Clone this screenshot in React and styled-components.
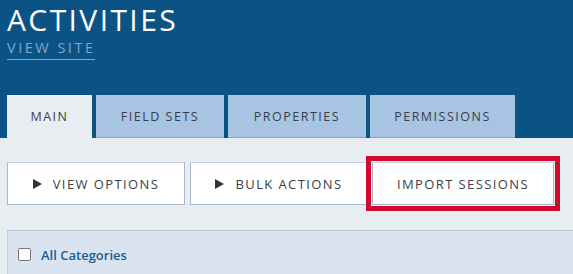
import React from "react";
import styled, { createGlobalStyle } from "styled-components";

const Global = createGlobalStyle`
  html, body { margin: 0; padding: 0; background: #e8edf2; }
  body { font-family: "Open Sans", Lato, sans-serif; }
  * { box-sizing: border-box; }
`;

const Page = styled.div`
  width: 573px;
  height: 274px;
  overflow: hidden;
  background: #e8edf2;
`;

const Header = styled.header`
  background: #0b5385;
  height: 138px;
  padding: 0 7px;
  display: flex;
  flex-direction: column;
`;

const Title = styled.h1`
  margin: 4px 0 0;
  font-size: 30px;
  font-weight: 400;
  line-height: 32px;
  letter-spacing: 2.4px;
  color: #ffffff;
`;

const SiteLink = styled.a`
  align-self: flex-start;
  margin-top: 3px;
  font-size: 14.5px;
  line-height: 17px;
  letter-spacing: 2.5px;
  color: #7fa6cb;
  text-decoration: none;
  border-bottom: 1px solid #7fa6cb;
  padding-bottom: 3px;
  margin-right: -2px;
`;

const Tabs = styled.nav`
  margin-top: auto;
  display: flex;
  gap: 4px;
`;

const Tab = styled.div`
  width: ${(p) => p.$w}px;
  height: 43px;
  display: flex;
  align-items: center;
  justify-content: center;
  font-size: 12.5px;
  letter-spacing: 1.5px;
  color: #3a3f4c;
  background: ${(p) => (p.$active ? "#e8edf2" : "#a7c4e2")};
  border-bottom: 1px solid ${(p) => (p.$active ? "#e8edf2" : "#8aa6c4")};
  padding-top: 1px;
`;

const Content = styled.main`
  padding: 24px 0 0 7px;
`;

const Toolbar = styled.div`
  display: flex;
  gap: 5px;
`;

const Button = styled.button`
  width: ${(p) => p.$w}px;
  height: 43px;
  background: #ffffff;
  border: 1px solid #a9b8c8;
  border-top-color: #c3cfdc;
  display: flex;
  align-items: center;
  justify-content: center;
  gap: 11px;
  font-family: inherit;
  font-size: 13px;
  letter-spacing: 1.4px;
  color: #3a3f4c;
  padding: 0;
  margin-left: ${(p) => p.$ml || 0}px;
  ${(p) =>
    p.$highlight &&
    `
    outline: 5px solid #cf0a2c;
    outline-offset: 1px;
  `}
`;

const Caret = styled.span`
  width: 0;
  height: 0;
  border-top: 5px solid transparent;
  border-bottom: 5px solid transparent;
  border-left: 9px solid #2d3340;
`;

const Panel = styled.section`
  margin-top: 25px;
  height: 60px;
  background: #dae4f0;
  border-top: 1px solid #b3c2d3;
  border-left: 1px solid #c3cfdd;
  display: flex;
  align-items: flex-start;
  padding: 16px 0 0 10px;
  gap: 10px;
`;

const Check = styled.span`
  width: 13px;
  height: 13px;
  margin-top: 1px;
  background: #ffffff;
  border: 1px solid #767676;
  border-radius: 2px;
`;

const Label = styled.span`
  font-size: 13px;
  font-weight: 600;
  color: #1b5c92;
  line-height: 16px;
`;

export default function App() {
  return (
    <Page>
      <Global />
      <Header>
        <Title>ACTIVITIES</Title>
        <SiteLink href="#">VIEW SITE</SiteLink>
        <Tabs>
          <Tab $w={85} $active>MAIN</Tab>
          <Tab $w={128}>FIELD SETS</Tab>
          <Tab $w={138}>PROPERTIES</Tab>
          <Tab $w={145}>PERMISSIONS</Tab>
        </Tabs>
      </Header>
      <Content>
        <Toolbar>
          <Button $w={178}>
            <Caret />
            VIEW OPTIONS
          </Button>
          <Button $w={178}>
            <Caret />
            BULK ACTIONS
          </Button>
          <Button $w={182} $ml={-1} $highlight>
            IMPORT SESSIONS
          </Button>
        </Toolbar>
        <Panel>
          <Check />
          <Label>All Categories</Label>
        </Panel>
      </Content>
    </Page>
  );
}
